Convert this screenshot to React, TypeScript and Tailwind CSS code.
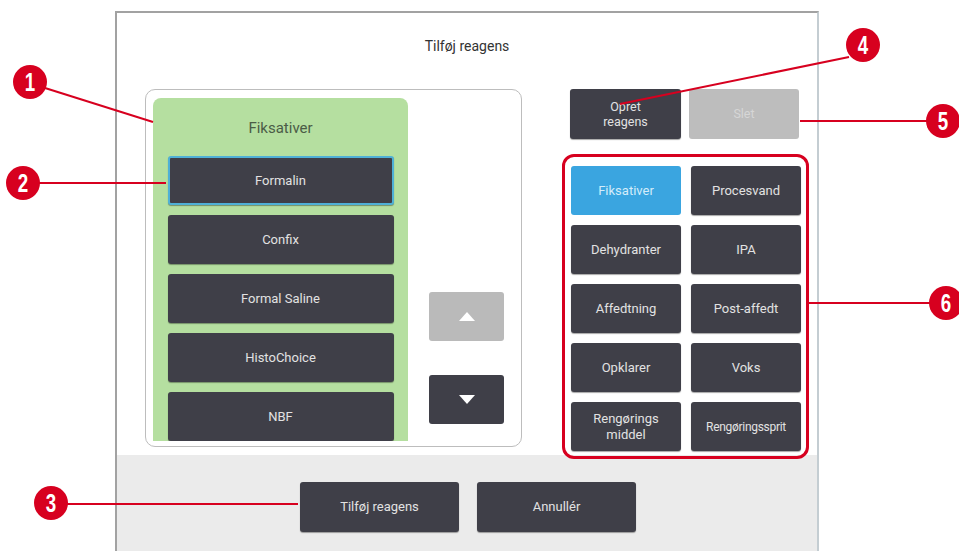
import { ReactNode } from 'react';

type Callout = {
  n: number;
  x: number;
  y: number;
};

const callouts: Callout[] = [
  { n: 1, x: 30, y: 82 },
  { n: 2, x: 23, y: 183 },
  { n: 3, x: 51, y: 503 },
  { n: 4, x: 863, y: 45 },
  { n: 5, x: 943, y: 121 },
  { n: 6, x: 946, y: 303 },
];

const reagents = ['Formalin', 'Confix', 'Formal Saline', 'HistoChoice', 'NBF'];

const groups: { label: ReactNode; active?: boolean; tight?: boolean }[] = [
  { label: 'Fiksativer', active: true },
  { label: 'Procesvand' },
  { label: 'Dehydranter' },
  { label: 'IPA' },
  { label: 'Affedtning' },
  { label: 'Post-affedt' },
  { label: 'Opklarer' },
  { label: 'Voks' },
  { label: <>Rengørings<br />middel</> },
  { label: 'Rengøringssprit', tight: true },
];

const darkBtn =
  'bg-[#3f3f48] text-[#e2e2e2] rounded-[3px] shadow-[0_1px_1px_rgba(0,0,0,0.35)] flex items-center justify-center text-center';

const App = () => {
  return (
    <div className="relative w-[959px] h-[551px] overflow-hidden bg-white pl-[115px] pt-[11px] font-['Roboto','Liberation_Sans',sans-serif]">
      {/* instrument screen */}
      <div className="w-[704px] h-[540px] border-2 border-b-0 border-[#a2a2a2] border-r-[#c4cdd2] flex flex-col bg-white">
        <div className="h-[76px] flex justify-center pt-[23px] text-[14px] text-[#333]">Tilføj reagens</div>

        <div className="h-[366px] flex pl-[28px]">
          {/* reagent list panel */}
          <div className="w-[377px] h-[358px] border-[1.5px] border-[#bdbdbd] rounded-[10px] flex pl-[7px] pt-[8px]">
            <div className="w-[255px] h-[343px] bg-[#b5dfa0] rounded-t-[8px] overflow-hidden flex flex-col items-center">
              <div className="h-[59px] flex items-center text-[15px] text-[#4b5c47] pt-[2px]">Fiksativer</div>
              <div className="flex flex-col gap-[10px]">
                {reagents.map((r, i) => (
                  <div
                    key={r}
                    className={`${darkBtn} w-[226px] h-[49px] shrink-0 text-[13px] ${
                      i === 0 ? 'border-2 border-[#4fb0d6]' : ''
                    }`}
                  >
                    {r}
                  </div>
                ))}
              </div>
            </div>
            <div className="flex flex-col ml-[21px] pt-[194px] gap-[34px]">
              <div className="w-[75px] h-[49px] bg-[#bababa] rounded-[3px] flex items-center justify-center">
                <div className="w-0 h-0 border-l-[8px] border-r-[8px] border-b-[9px] border-l-transparent border-r-transparent border-b-white" />
              </div>
              <div className="w-[75px] h-[49px] bg-[#3f3f48] rounded-[3px] flex items-center justify-center">
                <div className="w-0 h-0 border-l-[8px] border-r-[8px] border-t-[9px] border-l-transparent border-r-transparent border-t-white" />
              </div>
            </div>
          </div>

          {/* right column */}
          <div className="ml-[48px] w-[232px] flex flex-col">
            <div className="flex gap-[8px]">
              <div className={`${darkBtn} w-[111px] h-[50px] text-[12.5px] leading-[15px]`}>
                Opret<br />reagens
              </div>
              <div className="w-[110px] h-[50px] bg-[#bdbdbd] rounded-[3px] flex items-center justify-center text-[12.5px] text-[#d6d6d6]">
                Slet
              </div>
            </div>
            <div className="mt-[27px] grid grid-cols-[110px_110px] gap-x-[10px] gap-y-[10px] ml-[1px]">
              {groups.map((g, i) => (
                <div
                  key={i}
                  className={`h-[49px] rounded-[3px] flex items-center justify-center text-center leading-[16px] ${
                    g.tight ? 'text-[12px] tracking-[-0.3px]' : 'text-[13px]'
                  } ${
                    g.active
                      ? 'bg-[#3aa5e0] text-[#d3ecfa]'
                      : 'bg-[#3f3f48] text-[#e2e2e2] shadow-[0_1px_1px_rgba(0,0,0,0.35)]'
                  }`}
                >
                  {g.label}
                </div>
              ))}
            </div>
          </div>
        </div>

        {/* bottom bar */}
        <div className="flex-1 bg-[#ebebeb] flex justify-center pt-[27px] gap-[18px] pl-[2px]">
          <div className={`${darkBtn} w-[159px] h-[50px] text-[13px]`}>Tilføj reagens</div>
          <div className={`${darkBtn} w-[159px] h-[50px] text-[13px]`}>Annullér</div>
        </div>
      </div>

      {/* callout annotations */}
      <svg className="absolute left-0 top-0 pointer-events-none" width="959" height="551">
        <g stroke="#d7001f" strokeWidth="2" fill="none">
          <line x1="45" y1="88" x2="153" y2="122" />
          <line x1="38" y1="183" x2="166" y2="183" />
          <line x1="66" y1="504" x2="298" y2="504" />
          <line x1="849" y1="57" x2="620" y2="104" />
          <line x1="800" y1="121" x2="928" y2="121" />
          <line x1="809" y1="303" x2="930" y2="303" />
        </g>
      </svg>
      <div className="absolute left-[562px] top-[154px] w-[247px] h-[305px] border-[3px] border-[#d7001f] rounded-[12px] pointer-events-none" />
      {callouts.map((c) => (
        <div
          key={c.n}
          className="absolute w-[34px] h-[34px] -ml-[17px] -mt-[17px] rounded-full bg-[#d7001f] flex items-center justify-center text-white"
          style={{ left: c.x, top: c.y }}
        >
          <span className="inline-block scale-x-[0.75] text-[25px] leading-none font-bold font-['Liberation_Sans',sans-serif]">
            {c.n}
          </span>
        </div>
      ))}
    </div>
  );
};

export default App;
